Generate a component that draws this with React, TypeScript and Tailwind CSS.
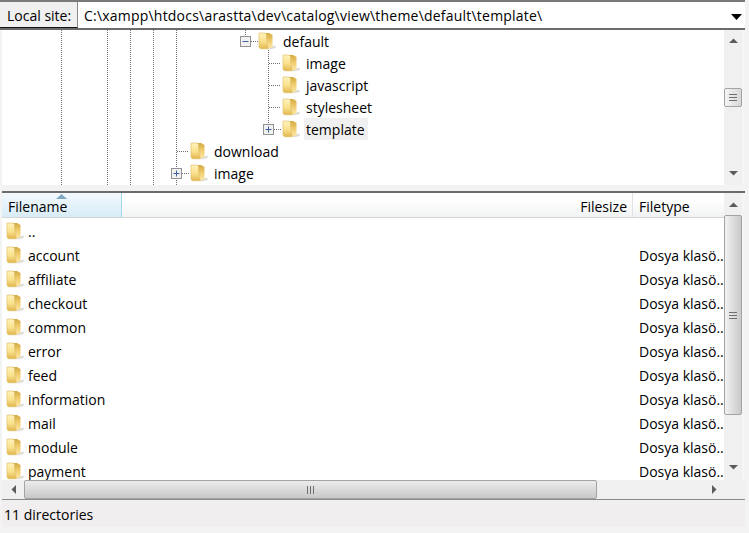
import { ReactNode } from 'react';

const treeRows = [
  { name: 'default', indent: 240, expander: 'minus' },
  { name: 'image', indent: 282 },
  { name: 'javascript', indent: 282 },
  { name: 'stylesheet', indent: 282 },
  { name: 'template', indent: 263, expander: 'plus', active: true },
  { name: 'download', indent: 190 },
  { name: 'image', indent: 171, expander: 'plus' },
];

const listRows = ['..', 'account', 'affiliate', 'checkout', 'common', 'error', 'feed', 'information', 'mail', 'module', 'payment'];

function Folder() {
  return (
    <svg width="18" height="18" viewBox="0 0 18 18" className="shrink-0">
      <defs>
        <linearGradient id="fback" x1="0" y1="0" x2="0" y2="1">
          <stop offset="0" stopColor="#d4aa42" />
          <stop offset="0.5" stopColor="#f0cd70" />
          <stop offset="1" stopColor="#fbe9a8" />
        </linearGradient>
        <linearGradient id="ffront" x1="0" y1="0" x2="0" y2="1">
          <stop offset="0" stopColor="#fff3bd" />
          <stop offset="0.55" stopColor="#fae08a" />
          <stop offset="1" stopColor="#e2b64e" />
        </linearGradient>
      </defs>
      <path d="M12 15.5 L17.5 13.5 L17.5 16 L11 17.5 Z" fill="#bdbdbd" opacity="0.6" />
      <path d="M7 1 H11 L14.5 3 V15.5 L10 16.5 Z" fill="url(#fback)" />
      <path d="M1 1 H7 L8.6 2.6 V10 L10.5 16.8 L3.5 16.8 C2 16.8 1 16 1 14.5 Z" fill="url(#ffront)" stroke="#dcbb62" strokeWidth="0.6" />
    </svg>
  );
}

function Expander({ type }: { type: string }) {
  return (
    <svg width="11" height="11" viewBox="0 0 11 11" className="shrink-0">
      <rect x="0.5" y="0.5" width="10" height="10" fill="#f1f1f1" stroke="#929292" />
      <path d={type === 'plus' ? 'M2.5 5.5H8.5M5.5 2.5V8.5' : 'M2.5 5.5H8.5'} stroke="#3f5f9f" />
    </svg>
  );
}

function Arrow({ dir }: { dir: 'up' | 'down' | 'left' | 'right' }) {
  const paths = {
    up: 'M0 5 L4.5 0.5 L9 5 Z',
    down: 'M0 0 H9 L4.5 4.5 Z',
    left: 'M5 0 V9 L0.5 4.5 Z',
    right: 'M0 0 V9 L4.5 4.5 Z',
  };
  return (
    <svg width={dir === 'up' || dir === 'down' ? 9 : 5} height={dir === 'up' || dir === 'down' ? 5 : 9} className="shrink-0">
      <path d={paths[dir]} fill="#5c5c5c" />
    </svg>
  );
}

function Grip({ vertical }: { vertical?: boolean }) {
  return vertical ? (
    <svg width="8" height="7" className="shrink-0">
      <path d="M0 .5H8M0 3.5H8M0 6.5H8" stroke="#6f6f6f" />
    </svg>
  ) : (
    <svg width="7" height="8" className="shrink-0">
      <path d="M.5 0V8M3.5 0V8M6.5 0V8" stroke="#6f6f6f" />
    </svg>
  );
}

function Thumb({ children, className }: { children: ReactNode; className: string }) {
  return <div className={`flex items-center justify-center rounded-[2px] border border-[#a3a3a3] ${className}`}>{children}</div>;
}

function TreeGuides() {
  return (
    <svg width="722" height="155" className="absolute left-0 top-0">
      <g stroke="#6e6e6e" strokeDasharray="1 1">
        <path d="M59.5 0V155M105.5 0V155M128.5 0V155M151.5 0V155M174.5 0V155" />
        <path d="M243.5 0V7M266.5 20V100" />
        <path d="M249 11.5H256M267 33.5H279M267 55.5H279M267 77.5H279M272 99.5H279M175 121.5H187M180 143.5H187" />
      </g>
    </svg>
  );
}

export default function App() {
  return (
    <div className="flex h-[533px] w-[749px] flex-col overflow-hidden bg-[#f3f3f3] text-[14px] whitespace-nowrap text-black" style={{ fontFamily: '"Open Sans", "Noto Sans", sans-serif' }}>
      {/* Local site bar */}
      <div className="mr-[4px] flex h-[30px] shrink-0 border-y-2 border-t-[2px] border-b-[#6b6b6b] border-t-[#7a7a7a] bg-white">
        <div className="flex w-[78px] shrink-0 items-center border-r border-r-[#8a8a8a] border-b border-b-[#111] bg-[#f0f0f0] pt-[1px] pl-[7px]">Local site:</div>
        <div className="flex flex-1 items-center pt-[1px] pl-[6px] tracking-[0.21px]">C:\xampp\htdocs\arastta\dev\catalog\view\theme\default\template\</div>
        <svg width="11" height="6" className="mr-[3px] mt-[12px] shrink-0">
          <path d="M0 0H11L5.5 6Z" fill="#000" />
        </svg>
      </div>

      {/* Local tree */}
      <div className="ml-[2px] mr-[4px] flex h-[155px] shrink-0 bg-white">
        <div className="relative flex-1 overflow-hidden">
          <TreeGuides />
          {treeRows.map((r, i) => (
            <div key={i} className="relative flex h-[22px] items-center" style={{ paddingLeft: r.indent - 2 }}>
              {r.expander && <Expander type={r.expander} />}
              {r.expander && <span className={r.expander === 'minus' ? 'w-[7px]' : 'w-[8px]'} />}
              <Folder />
              <span className={`pt-[1px] leading-[21px] ${r.expander === 'minus' ? 'ml-[4px] pl-[3px] pr-[3px]' : 'ml-[4px] pl-[2px] pr-[3px]'} ${r.active ? 'bg-[#f0f0f0]' : ''}`}>{r.name}</span>
            </div>
          ))}
        </div>
        <div className="flex w-[18px] shrink-0 flex-col items-center bg-[#f0f0f0] pt-[8px] pb-[9px]">
          <Arrow dir="up" />
          <div className="mt-[45px] w-full">
            <Thumb className="h-[19px] w-[18px] bg-gradient-to-r from-[#f5f5f5] to-[#d8d8d8]">
              <Grip vertical />
            </Thumb>
          </div>
          <div className="flex-1" />
          <Arrow dir="down" />
        </div>
        <div className="w-[3px] shrink-0 bg-[#f5f5f5]" />
      </div>

      <div className="h-[6px] shrink-0 bg-[#f3f3f3]" />

      {/* Local file list */}
      <div className="ml-[2px] mr-[4px] flex h-[308px] shrink-0 flex-col border-t-2 border-t-[#6b6b6b] bg-white">
        <div className="flex min-h-0 flex-1">
          <div className="flex min-w-0 flex-1 flex-col">
            <div className="flex h-[25px] shrink-0 border-b border-b-[#d5d5d5] bg-gradient-to-b from-white from-30% to-[#f1f2f3]">
              <div className="relative flex w-[120px] shrink-0 items-end border-r border-r-[#9fd6f0] bg-gradient-to-b from-[#f2f9fd] to-[#d8ecf7] pl-[6px]">
                <svg width="11" height="5" className="absolute left-[54px] top-[1px]">
                  <path d="M0 5L5.5 0L11 5Z" fill="#7fa8c0" />
                </svg>
                Filename
              </div>
              <div className="flex-1" />
              <div className="flex w-[511px] shrink-0 items-end">
                <div className="flex-1" />
                <div className="mr-[5px]">Filesize</div>
                <div className="h-full w-px bg-[#dfe3e6]" />
                <div className="w-[91px] pl-[6px]">Filetype</div>
              </div>
            </div>
            <div className="min-h-0 flex-1 overflow-hidden pt-[1px]">
              {listRows.map((name, i) => (
                <div key={i} className="flex h-[24px] items-center pl-[4px]">
                  <Folder />
                  <span className="ml-[4px] flex-1">{name}</span>
                  {i > 0 && <span className="w-[85px] shrink-0">Dosya klasö..</span>}
                </div>
              ))}
            </div>
          </div>
          <div className="flex w-[18px] shrink-0 flex-col items-center bg-[#f0f0f0] pt-[9px] pb-[10px]">
            <Arrow dir="up" />
            <div className="mt-[8px] w-full">
              <Thumb className="h-[200px] w-[18px] bg-gradient-to-r from-[#f2f2f2] to-[#c9c9c9]">
                <Grip vertical />
              </Thumb>
            </div>
            <div className="flex-1" />
            <Arrow dir="down" />
          </div>
          <div className="w-[3px] shrink-0 bg-[#f5f5f5]" />
        </div>
        <div className="flex h-[19px] shrink-0 items-center bg-[#f0f0f0]">
          <div className="flex w-[22px] shrink-0 justify-center">
            <Arrow dir="left" />
          </div>
          <Thumb className="h-[19px] w-[573px] bg-gradient-to-b from-[#ececec] to-[#c8c8c8]">
            <Grip />
          </Thumb>
          <div className="flex-1" />
          <div className="mr-[28px] flex">
            <Arrow dir="right" />
          </div>
        </div>
      </div>

      {/* Status bar */}
      <div className="ml-[2px] mr-[4px] flex h-[28px] shrink-0 items-center border-t border-t-[#8a8a8a] bg-[#f0eeee] pt-[1px] pl-[2px]">11 directories</div>
    </div>
  );
}
